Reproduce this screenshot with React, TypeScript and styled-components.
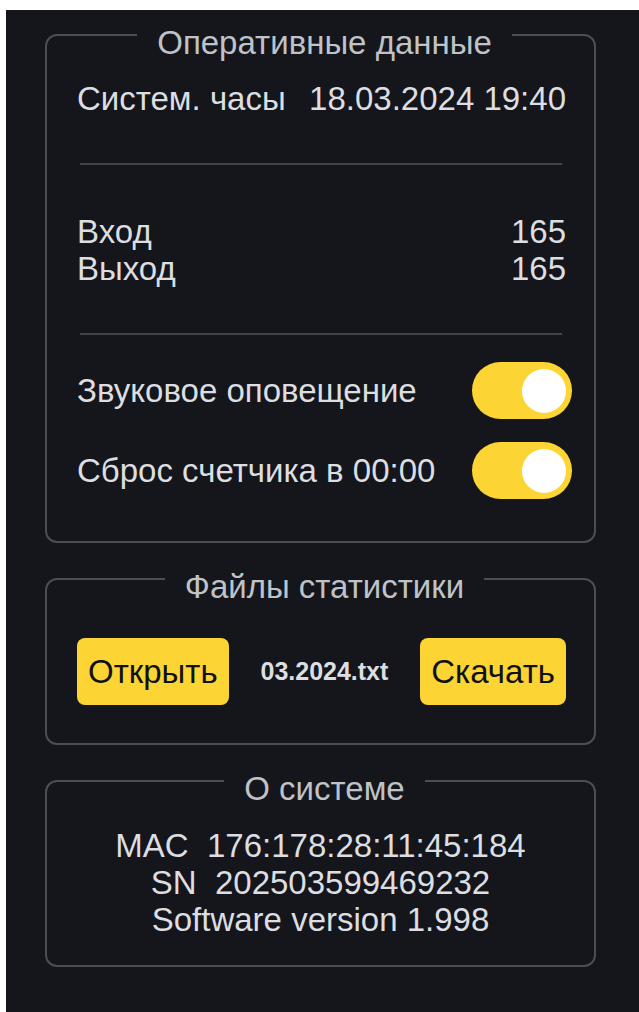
import styled, { createGlobalStyle } from "styled-components"

const GlobalStyle = createGlobalStyle`
html, body {
    margin: 0;
    background: #ffffff;
}
body {
    padding: 10px 0 0 6px;
    font-family: "Liberation Sans", Arial, sans-serif;
}
`

const Toggle = ({ on }: { on: boolean }) => (
    <Switch $on={on}>
        <Knob />
    </Switch>
)

const App = () => {
    return (
        <>
            <GlobalStyle />
            <Panel>
                <Group>
                    <Legend>Оперативные данные</Legend>
                    <Row $top={20}>
                        <span>Систем. часы</span>
                        <span>18.03.2024 19:40</span>
                    </Row>
                    <Divider $top={46} />
                    <Counters>
                        <Row>
                            <span>Вход</span>
                            <span>165</span>
                        </Row>
                        <Row>
                            <span>Выход</span>
                            <span>165</span>
                        </Row>
                    </Counters>
                    <Divider $top={46} />
                    <Switches>
                        <SwitchRow>
                            <span>Звуковое оповещение</span>
                            <Toggle on />
                        </SwitchRow>
                        <SwitchRow>
                            <span>Сброс счетчика в 00:00</span>
                            <Toggle on />
                        </SwitchRow>
                    </Switches>
                </Group>

                <Group $bottom={38}>
                    <Legend>Файлы статистики</Legend>
                    <Files>
                        <Button>Открыть</Button>
                        <FileName>03.2024.txt</FileName>
                        <Button>Скачать</Button>
                    </Files>
                </Group>

                <Group $bottom={27}>
                    <Legend>О системе</Legend>
                    <About>
                        <div>MAC&nbsp; 176:178:28:11:45:184</div>
                        <div>SN&nbsp; 202503599469232</div>
                        <div>Software version 1.998</div>
                    </About>
                </Group>
            </Panel>
        </>
    )
}

export default App

const Panel = styled.div`
min-height: calc(100vh - 10px);
box-sizing: border-box;
background-color: #14161b;
padding: 0 43px 0 39px;
display: flex;
flex-direction: column;
gap: 11px;
`

const Group = styled.fieldset<{ $bottom?: number }>`
margin: 0;
padding: 0 22px ${p => p.$bottom ?? 42}px 30px;
min-inline-size: 0;
border: 2px solid #4b4e56;
border-radius: 12px;
color: #dcdee1;
font-size: 33px;
line-height: 37px;
`

const Legend = styled.legend`
margin: 0 auto;
padding: 16px 20px 0;
font-size: 33px;
line-height: 34px;
color: #bfc2c7;
`

const Row = styled.div<{ $top?: number }>`
display: flex;
justify-content: space-between;
padding-right: 6px;
margin-top: ${p => p.$top ?? 0}px;
`

const Divider = styled.div<{ $top: number }>`
height: 2px;
margin: ${p => p.$top}px 10px 0 3px;
background-color: #41444b;
`

const Counters = styled.div`
margin-top: 48px;
`

const Switches = styled.div`
margin-top: 27px;
display: flex;
flex-direction: column;
gap: 23px;
`

const SwitchRow = styled.div`
display: flex;
align-items: center;
justify-content: space-between;
`

const Switch = styled.div<{ $on: boolean }>`
width: 100px;
height: 57px;
border-radius: 29px;
background-color: ${p => (p.$on ? "#fcd434" : "#555")};
display: flex;
align-items: center;
justify-content: ${p => (p.$on ? "flex-end" : "flex-start")};
padding: 0 6px;
box-sizing: border-box;
`

const Knob = styled.div`
width: 44px;
height: 44px;
border-radius: 50%;
background-color: #ffffff;
`

const Files = styled.div`
margin-top: 34px;
padding-right: 6px;
display: flex;
align-items: center;
justify-content: space-between;
`

const Button = styled.div`
height: 67px;
padding: 0 11px;
display: flex;
align-items: center;
background-color: #fcd434;
border-radius: 8px;
color: #111111;
font-size: 33px;
`

const FileName = styled.div`
font-size: 25px;
font-weight: 700;
color: #dcdee1;
`

const About = styled.div`
margin: 21px 0 0 -8px;
text-align: center;
`
